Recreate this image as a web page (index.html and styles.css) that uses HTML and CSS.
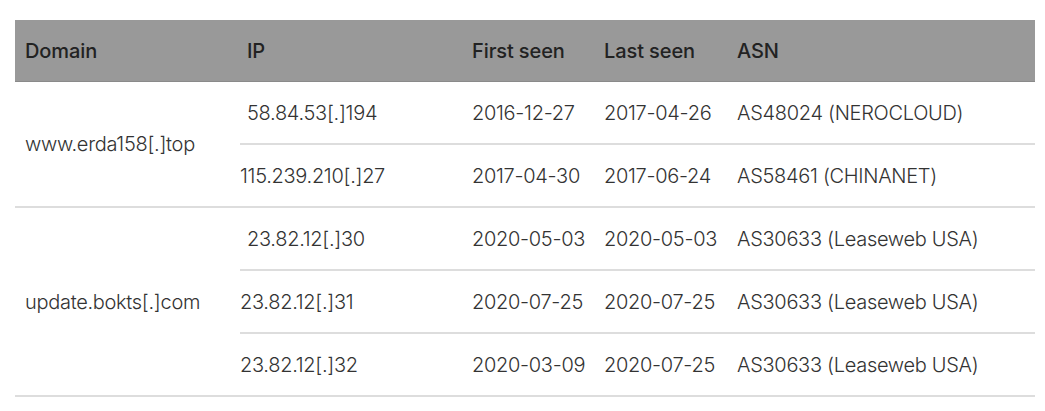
FILE: index.html
```html
<!DOCTYPE html>
<html>
<head>
<meta charset="utf-8">
<link rel="stylesheet" href="styles.css">
</head>
<body>
<table class="ioc">
  <colgroup>
    <col class="c-domain">
    <col class="c-ip">
    <col class="c-first">
    <col class="c-last">
    <col class="c-asn">
  </colgroup>
  <thead>
    <tr>
      <th>Domain</th>
      <th class="ip ind">IP</th>
      <th>First seen</th>
      <th>Last seen</th>
      <th>ASN</th>
    </tr>
  </thead>
  <tbody>
    <tr>
      <td rowspan="2">www.erda158[.]top</td>
      <td class="ip ind">58.84.53[.]194</td>
      <td>2016-12-27</td>
      <td>2017-04-26</td>
      <td>AS48024 (NEROCLOUD)</td>
    </tr>
    <tr>
      <td class="ip">115.239.210[.]27</td>
      <td>2017-04-30</td>
      <td>2017-06-24</td>
      <td>AS58461 (CHINANET)</td>
    </tr>
    <tr>
      <td rowspan="3">update.bokts[.]com</td>
      <td class="ip ind">23.82.12[.]30</td>
      <td>2020-05-03</td>
      <td>2020-05-03</td>
      <td>AS30633 (Leaseweb USA)</td>
    </tr>
    <tr>
      <td class="ip">23.82.12[.]31</td>
      <td>2020-07-25</td>
      <td>2020-07-25</td>
      <td>AS30633 (Leaseweb USA)</td>
    </tr>
    <tr>
      <td class="ip">23.82.12[.]32</td>
      <td>2020-03-09</td>
      <td>2020-07-25</td>
      <td>AS30633 (Leaseweb USA)</td>
    </tr>
  </tbody>
</table>
</body>
</html>
```

FILE: styles.css
```css
html, body {
  margin: 0;
  padding: 0;
  background: #ffffff;
}

body {
  padding: 20px 10px 0 15px;
  font-family: Inter, "Open Sans", sans-serif;
  font-size: 20px;
  font-weight: 300;
  letter-spacing: -0.3px;
  color: #333333;
}

.ioc {
  border-collapse: collapse;
  table-layout: fixed;
  width: 1020px;
}

.c-domain { width: 225px; }
.c-ip { width: 222px; }
.c-first { width: 132px; }
.c-last { width: 133px; }
.c-asn { width: 308px; }

.ioc th {
  background: #999999;
  color: #222222;
  font-weight: 500;
  letter-spacing: -0.1px;
  text-align: left;
  height: 61px;
  padding: 0 0 0 10px;
  border-bottom: 1px solid #8a8a8a;
  vertical-align: middle;
}

.ioc td {
  height: 61px;
  padding: 0 0 0 10px;
  border-bottom: 2px solid #dddddd;
  vertical-align: middle;
  white-space: nowrap;
}

.ioc .ip {
  padding-left: 0;
}

.ioc .ip.ind {
  padding-left: 7px;
}
```
